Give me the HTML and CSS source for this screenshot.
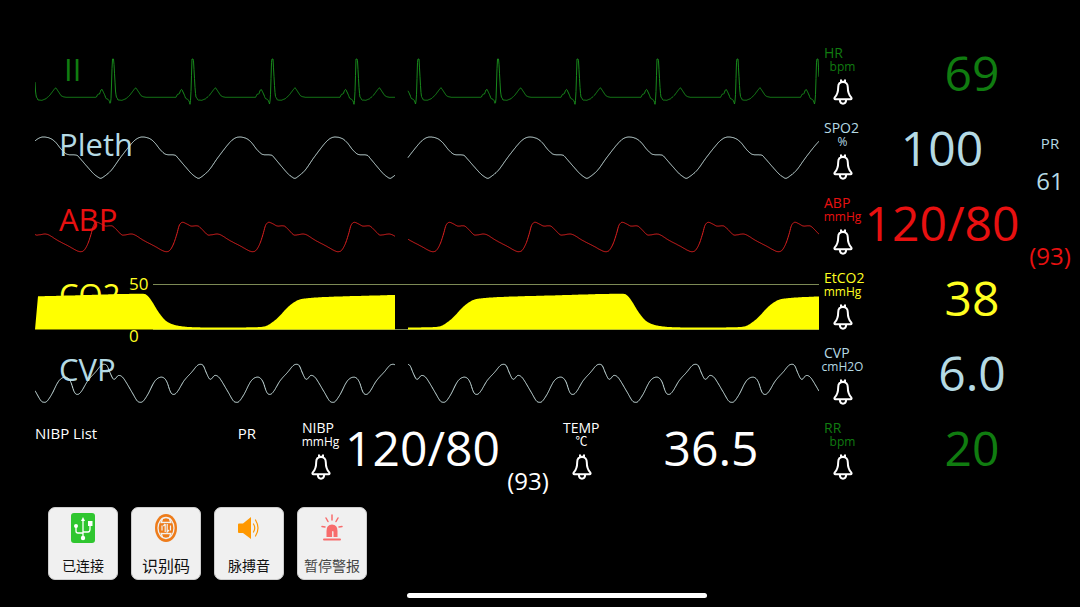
FILE: index.html
```html
<!DOCTYPE html>
<html lang="zh-CN">
<head>
  <meta charset="UTF-8" />
  <meta name="viewport" content="width=device-width, initial-scale=1.0"/>
  <title>Patient Monitor</title>
  <link rel="stylesheet" href="styles.css">
</head>
<body>
  <!-- shared bell icon -->
  <svg class="sprite" aria-hidden="true">
    <symbol id="bell" viewBox="0 0 20 26">
      <path d="M8 .5v3M12 .5v3M8 2.800h4M10 3C7 3 5.200 5 5.200 8.200c0 5-.7 7.300-3.400 10.200-.8 1-.4 1.800.6 1.800h15.200c1 0 1.400-.8.6-1.800-2.700-2.900-3.400-5.200-3.400-10.200C14.800 5 13 3 10 3zM6.800 21c.2 2.500 1.500 3.700 3.200 3.700s3-1.200 3.200-3.700"/>
    </symbol>
  </svg>

  <main class="monitor">
    <section class="waves">
      <div class="wave green">
        <span class="wave-label indent">II</span>
        <svg class="trace" data-wave="ecg" viewBox="0 0 784 75" preserveAspectRatio="none"></svg>
      </div>
      <div class="wave blue">
        <span class="wave-label">Pleth</span>
        <svg class="trace" data-wave="pleth" viewBox="0 0 784 75" preserveAspectRatio="none"></svg>
      </div>
      <div class="wave red">
        <span class="wave-label">ABP</span>
        <svg class="trace" data-wave="abp" viewBox="0 0 784 75" preserveAspectRatio="none"></svg>
      </div>
      <div class="wave yellow">
        <span class="wave-label">CO2</span>
        <div class="scale"><span>50</span><span>0</span></div>
        <svg class="trace" data-wave="co2" viewBox="0 0 784 75" preserveAspectRatio="none">
          <path class="grid-line" d="M118 17.500H784M118 62.500H784"/>
        </svg>
      </div>
      <div class="wave blue">
        <span class="wave-label">CVP</span>
        <svg class="trace" data-wave="cvp" viewBox="0 0 784 75" preserveAspectRatio="none"></svg>
      </div>
      <div class="bottom-row">
        <div class="nibp-list"><span>NIBP List</span><span>PR</span></div>
        <div class="param nibp">
          <div class="info">
            <span class="name">NIBP</span><span class="unit">mmHg</span>
            <svg class="bell"><use href="#bell"/></svg>
          </div>
          <span class="value">120/80</span>
          <div class="extra"><span class="sub">(93)</span></div>
        </div>
        <div class="param">
          <div class="info">
            <span class="name">TEMP</span><span class="unit">℃</span>
            <svg class="bell"><use href="#bell"/></svg>
          </div>
          <span class="value">36.5</span>
        </div>
      </div>
    </section>

    <section class="params">
      <div class="param green">
        <div class="info">
          <span class="name">HR</span><span class="unit">bpm</span>
          <svg class="bell"><use href="#bell"/></svg>
        </div>
        <span class="value">69</span>
      </div>
      <div class="param blue">
        <div class="info">
          <span class="name">SPO2</span><span class="unit">%</span>
          <svg class="bell"><use href="#bell"/></svg>
        </div>
        <span class="value">100</span>
        <div class="extra"><span class="pr">PR</span><span class="sub">61</span></div>
      </div>
      <div class="param red">
        <div class="info">
          <span class="name">ABP</span><span class="unit">mmHg</span>
          <svg class="bell"><use href="#bell"/></svg>
        </div>
        <span class="value">120/80</span>
        <div class="extra"><span class="sub">(93)</span></div>
      </div>
      <div class="param yellow">
        <div class="info">
          <span class="name">EtCO2</span><span class="unit">mmHg</span>
          <svg class="bell"><use href="#bell"/></svg>
        </div>
        <span class="value">38</span>
      </div>
      <div class="param blue">
        <div class="info">
          <span class="name">CVP</span><span class="unit">cmH2O</span>
          <svg class="bell"><use href="#bell"/></svg>
        </div>
        <span class="value">6.0</span>
      </div>
      <div class="param green">
        <div class="info">
          <span class="name">RR</span><span class="unit">bpm</span>
          <svg class="bell"><use href="#bell"/></svg>
        </div>
        <span class="value">20</span>
      </div>
    </section>
  </main>

  <nav class="toolbar">
    <button type="button" class="tool">
      <svg width="24" height="30" viewBox="0 0 24 30">
        <rect width="24" height="30" rx="3" fill="#2fc62f"/>
        <g fill="none" stroke="#fff" stroke-width="1.300">
          <path d="M12 7v18M5 13v5q0 2 2 2h5M19 12v4q0 3-2 3h-5"/>
        </g>
        <path d="M12 4l2 4h-4z" fill="#fff"/>
        <circle cx="12" cy="25" r="2.200" fill="#fff"/>
        <circle cx="5" cy="13" r="2" fill="#fff"/>
        <rect x="17" y="8" width="4.500" height="5" fill="#fff"/>
      </svg>
      <span>已连接</span>
    </button>
    <button type="button" class="tool">
      <svg width="24" height="30" viewBox="0 0 24 30">
        <ellipse cx="12" cy="15" rx="11" ry="14" fill="#ee7c1b"/>
        <g fill="none" stroke="#f0f0f0" stroke-width="1.300">
          <ellipse cx="12" cy="15" rx="8" ry="10.500"/>
          <path d="M8.500 6q-1 2-1.200 4M15.500 6q1 2 1.200 4M8.500 24q-1-2-1.200-4M15.500 24q1-2 1.200-4M6.500 9.500h11M6.500 20.500h11"/>
        </g>
        <rect x="6" y="10.500" width="12" height="9" rx="3" fill="#ee7c1b"/>
        <path d="M8 12.500v5M11.200 11v8M11.200 11l-1.800 2M13.200 11v8l1.800-2M16.500 12.500v5" fill="none" stroke="#f0f0f0" stroke-width="1.200"/>
      </svg>
      <span class="large">识别码</span>
    </button>
    <button type="button" class="tool">
      <svg width="24" height="30" viewBox="0 0 24 30">
        <path d="M2 10.500h4L14 4v22l-8-6H2q-1 0-1-1v-7.500q0-1 1-1z" fill="#ff9800"/>
        <path d="M16.500 11q2.500 4 0 8M18.500 7q5 8 0 16" fill="none" stroke="#ff9800" stroke-width="1.200" stroke-linecap="round"/>
      </svg>
      <span>脉搏音</span>
    </button>
    <button type="button" class="tool muted">
      <svg width="24" height="30" viewBox="0 0 24 30">
        <path d="M6.500 24v-6q0-6.500 5.500-6.500t5.500 6.500v6h-4v-5q0-1-.7-1t-.7 1v5z" fill="#f76c6c"/>
        <path d="M4 26.500h16" stroke="#f76c6c" stroke-width="2" stroke-linecap="round"/>
        <path d="M12 2v5M6 5l2 3.500M18 5l-2 3.500M2 13.500l3 .5M22 13.500l-3 .5" stroke="#f76c6c" stroke-width="1.500" stroke-linecap="round"/>
      </svg>
      <span>暂停警报</span>
    </button>
  </nav>

  <div class="home-bar"></div>

  <script src="script.js"></script>
</body>
</html>
```

FILE: styles.css
```css
* {
  margin: 0;
  padding: 0;
  box-sizing: border-box;
}

body {
  font-family: 'Open Sans', 'Noto Sans CJK SC', sans-serif;
  background: #000;
  color: #fff;
  min-height: 100vh;
  display: flex;
  flex-direction: column;
  overflow: hidden;
}

.sprite {
  display: none;
}

.green {
  color: #107c10;
}

.blue {
  color: #b5dae4;
}

.red {
  color: #e81010;
}

.yellow {
  color: #ffff20;
}

.monitor {
  display: grid;
  grid-template-columns: 1fr 261px;
  padding-top: 42px;
}

.waves {
  min-width: 0;
}

/* label, scale and trace share one cell */
.wave {
  display: grid;
  height: 75px;
  padding-left: 35px;
}

.wave > * {
  grid-area: 1 / 1;
}

.wave-label {
  font-size: 31px;
  line-height: 54px;
  padding-left: 24px;
}

.wave-label.indent {
  padding-left: 29px;
}

.trace {
  width: 100%;
  height: 75px;
  z-index: 1;
}

.trace path {
  fill: none;
  stroke: currentColor;
  stroke-width: 1px;
  vector-effect: non-scaling-stroke;
}

.green .trace {
  color: #188a1c;
}

.blue .trace {
  color: #cfe6e6;
}

.red .trace {
  color: #e02020;
}

.trace .area {
  fill: #ffff00;
  stroke: none;
}

.trace .grid-line {
  stroke: #7d8a55;
}

.scale {
  display: flex;
  flex-direction: column;
  justify-content: space-between;
  height: 80px;
  padding-top: 6px;
  padding-left: 94px;
  font-size: 17px;
  line-height: 22px;
}

.bottom-row {
  display: grid;
  grid-template-columns: 267px 261px 1fr;
  height: 75px;
  padding-left: 35px;
}

.nibp-list {
  display: flex;
  justify-content: space-between;
  padding-top: 5px;
  padding-right: 46px;
  font-size: 15px;
  line-height: 22px;
}

.param {
  display: flex;
  height: 75px;
}

.params .param {
  padding-left: 5px;
}

.info {
  display: flex;
  flex-direction: column;
  width: 37px;
  padding-top: 3px;
}

.name {
  font-size: 14px;
  line-height: 15px;
}

.unit {
  align-self: center;
  font-size: 12px;
  line-height: 13px;
}

.bell {
  align-self: center;
  flex-shrink: 0;
  width: 20px;
  height: 26px;
  margin-top: 6px;
  fill: none;
  stroke: #fff;
  stroke-width: 2px;
}

.value {
  flex: 1;
  padding-left: 3px;
  font-size: 48px;
  line-height: 62px;
  text-align: center;
  white-space: nowrap;
}

.extra {
  display: flex;
  flex-direction: column;
  align-items: center;
  justify-content: flex-end;
  width: 60px;
  height: 83px;
  font-size: 24px;
  line-height: 38px;
}

.extra .pr {
  font-size: 15px;
}

.nibp {
  padding-right: 10px;
}

.nibp .extra {
  width: 50px;
}

.toolbar {
  display: flex;
  gap: 13px;
  padding: 15px 48px 13px;
}

.tool {
  display: flex;
  flex-direction: column;
  align-items: center;
  justify-content: space-between;
  width: 70px;
  height: 73px;
  padding: 5px 0 4px;
  border: 1px solid #ccc;
  border-radius: 7px;
  background: #f0f0f0;
  color: #111;
  font-family: 'Noto Sans CJK SC', sans-serif;
  font-size: 14px;
  line-height: 20px;
  cursor: pointer;
}

.tool .large {
  font-size: 16px;
}

.tool.muted {
  color: #444;
}

.home-bar {
  width: 300px;
  height: 5px;
  margin-left: 407px;
  border-radius: 3px;
  background: #fff;
}
```

FILE: script.js
```js
// each wave: one cycle as [dx, y] from its anchor, and the anchors of every beat
const waves = {
  ecg: {
    period: 79.8,
    anchors: [[-2, 78, 157.7, 237.3, 321.7, 401], [303, 383.3, 463, 542.7, 622.7, 702.3, 782.3]],
    fixed: true,
    cycle: [[-16.7, 55.3], [-15.3, 52.3], [-13.5, 52], [-12, 48], [-11, 47.3], [-8.5, 52.5], [-7, 56.5], [-5, 57.3],
      [-3.7, 59], [-2.7, 62.3], [-1.9, 56], [-0.7, 17], [0.7, 17], [2.5, 49], [3.3, 55.3], [4, 55.6], [5, 58],
      [9, 58.3], [13, 56.7], [17, 53], [21, 47.6], [22.7, 45.7], [24, 47.5], [28, 53.6], [30, 54.7], [33, 55.3], [60, 55.3]]
  },
  pleth: {
    period: 99.2,
    anchors: [[-90, 9, 108, 205, 300.7, 395.7], [296, 395.7, 495.3, 594.3, 694, 793.3]],
    smooth: true,
    cycle: [[0, 20], [7, 21.7], [12, 25.7], [17.3, 32.3], [22, 36.7], [25, 37.7], [33, 38.3], [36, 41.3], [42.7, 49],
      [50, 57], [55, 60.7], [56.7, 61.3], [58.5, 60.7], [65, 55.7], [69, 51.3], [76.5, 40.7], [88.5, 25.7], [94, 21.2]]
  },
  abp: {
    period: 86.4,
    anchors: [[-24, 62.3, 148, 234.3, 319.7, 406], [328.3, 414.7, 500.3, 587.7, 673.7, 760.3]],
    smooth: true,
    cycle: [[0, 30.3], [4, 32], [8, 34], [15, 34], [19, 37.3], [24.5, 42.7], [28, 42.9], [34, 42], [38, 43], [46, 48],
      [58, 54.3], [66, 58.7], [70, 59.7], [73.4, 58], [77.1, 51.3], [80.4, 41.3], [82.4, 34], [84.4, 31]]
  },
  co2: {
    period: 305,
    anchors: [[-75, 230], [405, 710]],
    smooth: true,
    area: true,
    cycle: [[0, 59.3], [6.7, 55.7], [13.3, 50.3], [23.3, 39.7], [31.7, 33.7], [38.3, 31.7], [60, 30], [110, 28.5], [181.7, 26.7],
      [186.7, 28], [191.7, 34], [198.3, 44.7], [205, 53], [211.7, 57], [221.7, 59.3], [236.7, 60.3], [290, 60.3]]
  },
  cvp: {
    period: 96.2,
    anchors: [[-27, 69, 165.3, 261.3, 357.7], [372, 468.3, 564.3, 660.3, 756.7]],
    smooth: true,
    cycle: [[0, 22.3], [3, 23.7], [6, 30.7], [9, 36.7], [11, 37], [14, 33.7], [17, 34], [20, 37], [28, 50.3], [33, 58.7],
      [36, 60.3], [39, 59.3], [44, 52], [49, 42], [52, 37.7], [56, 35.3], [60, 36], [63, 40.3], [66, 49], [68, 52],
      [71, 52], [74, 48.7], [80, 38.7], [88, 29.7], [93, 23.7]]
  }
};

// the sweep gap sits between the two ranges
const ranges = [[0, 360], [373, 784]];
const BASE = 62.5;

function expand(wave, anchors) {
  const all = [anchors[0] - wave.period, ...anchors, anchors[anchors.length - 1] + wave.period];
  const points = [];
  all.forEach((a, i) => {
    // stretch the cycle to the next beat, except where the shape keeps its width
    const next = i < all.length - 1 ? all[i + 1] : a + wave.period;
    const scale = wave.fixed ? 1 : (next - a) / wave.period;
    wave.cycle.forEach(([dx, y]) => points.push([a + dx * scale, y]));
  });
  return points;
}

function valueAt(points, x, smooth) {
  let i = 1;
  while (i < points.length - 3 && points[i + 1][0] < x) i++;
  const [x1, y1] = points[i];
  const [x2, y2] = points[i + 1];
  const t = (x - x1) / (x2 - x1);
  if (!smooth) return y1 + (y2 - y1) * t;
  const [x0, y0] = points[i - 1];
  const [x3, y3] = points[i + 2];
  const m1 = (y2 - y0) / (x2 - x0) * (x2 - x1);
  const m2 = (y3 - y1) / (x3 - x1) * (x2 - x1);
  const t2 = t * t;
  const t3 = t2 * t;
  return (2 * t3 - 3 * t2 + 1) * y1 + (t3 - 2 * t2 + t) * m1 + (3 * t2 - 2 * t3) * y2 + (t3 - t2) * m2;
}

document.querySelectorAll('.trace').forEach(svg => {
  const wave = waves[svg.dataset.wave];
  ranges.forEach(([from, to], n) => {
    const points = expand(wave, wave.anchors[n]);
    const start = wave.area && n === 0 ? 3 : from;
    const line = [];
    for (let x = start; x <= to; x += 0.5) {
      line.push(x + ' ' + valueAt(points, x, wave.smooth).toFixed(1));
    }
    const path = document.createElementNS('http://www.w3.org/2000/svg', 'path');
    if (wave.area) {
      path.setAttribute('class', 'area');
      path.setAttribute('d', `M${from} ${BASE}L${line.join('L')}L${to} ${BASE}Z`);
    } else {
      path.setAttribute('d', 'M' + line.join('L'));
    }
    svg.appendChild(path);
  });
});
```
